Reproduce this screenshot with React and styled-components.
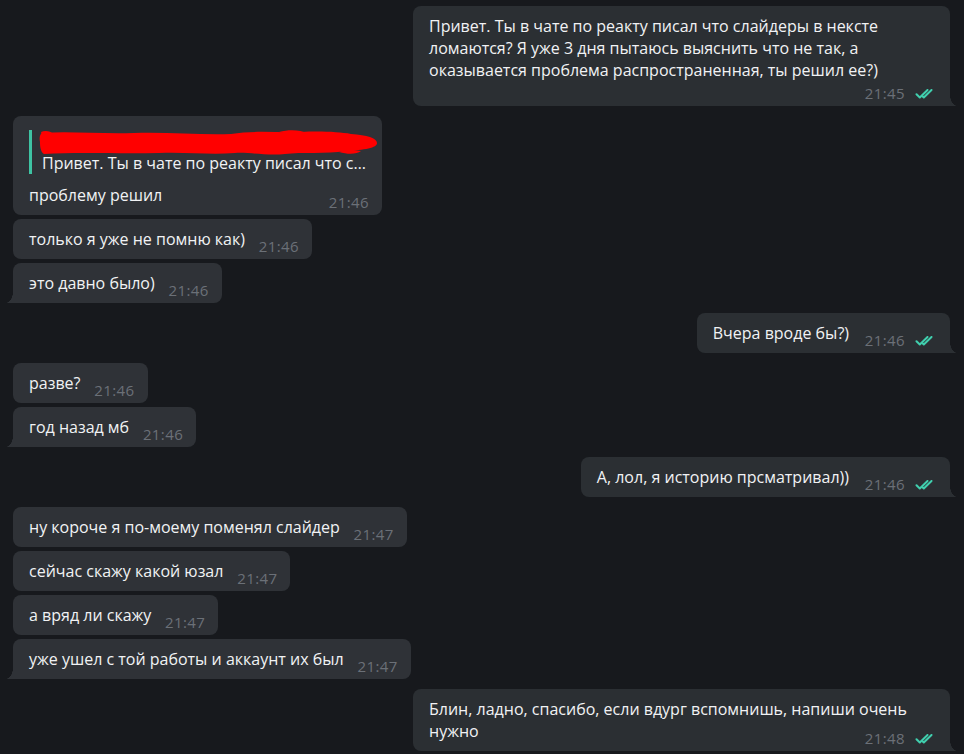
import styled, { createGlobalStyle } from "styled-components";

const GlobalStyle = createGlobalStyle`
  html, body {
    margin: 0;
    padding: 0;
    background: #17191d;
  }
  body {
    font-family: "Open Sans", "Noto Sans", sans-serif;
    -webkit-font-smoothing: antialiased;
  }
`;

const IN_BG = "#2f3237";
const OUT_BG = "#2b2f33";

const Chat = styled.div`
  display: flex;
  flex-direction: column;
  gap: 10px;
  padding: 6px 14px 0 13px;
  height: 754px;
  box-sizing: border-box;
  overflow: hidden;
`;

const Group = styled.div`
  display: flex;
  flex-direction: column;
  gap: 4px;
  align-items: ${props => (props.$out ? "flex-end" : "flex-start")};
`;

const Bubble = styled.div`
  position: relative;
  box-sizing: border-box;
  max-width: 537px;
  padding: 9px 13px 9px 16px;
  background: ${props => (props.$out ? OUT_BG : IN_BG)};
  border-radius: 8px;
  color: #f1f2f4;
  font-size: 16px;
  line-height: 16px;
  ${props =>
    props.$tail &&
    (props.$out
      ? `border-bottom-right-radius: 0;`
      : `border-bottom-left-radius: 0;`)}

  &::before {
    content: "";
    display: ${props => (props.$tail ? "block" : "none")};
    position: absolute;
    bottom: 0;
    width: 7px;
    height: 11px;
    ${props => (props.$out ? "right: -7px;" : "left: -7px;")}
    background: radial-gradient(
      ellipse 7px 11px at ${props => (props.$out ? "100% 0" : "0 0")},
      transparent 96%,
      ${props => (props.$out ? OUT_BG : IN_BG)} 100%
    );
  }
`;

const Text = styled.div`
  white-space: pre-wrap;
  word-wrap: break-word;
`;

const Line = styled.span`
  line-height: 22px;
`;

// reserves room at the end of the last line for the time / checks
const Spacer = styled.span`
  display: inline-block;
  width: ${props => (props.$out ? 88 : 54)}px;
  height: 16px;
  vertical-align: bottom;
`;

const Meta = styled.div`
  position: absolute;
  right: 13px;
  bottom: 5px;
  display: flex;
  align-items: baseline;
  gap: 10px;
  height: 16px;
  font-size: 15px;
  letter-spacing: 0.4px;
  line-height: 16px;
  color: #6b7077;
`;

const Reply = styled.div`
  width: 327px;
  margin: 6px 0 10px;
  padding-left: 10px;
  border-left: 3px solid #3ec3a3;
  line-height: 22px;
`;

const ReplyName = styled.div`
  height: 22px;
`;

const Redaction = styled.svg`
  display: block;
  margin: -1px 0 0 -3px;
`;

const ReplyText = styled.div`
  white-space: nowrap;
  overflow: hidden;
  text-overflow: ellipsis;
`;

function DoubleCheck() {
  return (
    <svg width="22" height="10" viewBox="0 0 22 10" fill="none">
      <path
        d="M1.5 5.2 L4.8 8.5 L12.5 1"
        stroke="#40cfae"
        strokeWidth="2"
        strokeLinecap="round"
        strokeLinejoin="round"
      />
      <path
        d="M7.5 7.2 L8.8 8.5 L16.5 1"
        stroke="#40cfae"
        strokeWidth="2"
        strokeLinecap="round"
        strokeLinejoin="round"
      />
    </svg>
  );
}

function Scribble() {
  return (
    <Redaction width="340" height="26" viewBox="0 0 340 26">
      <path
        fill="#ff0000"
        d="M3 3 C30 1 60 4 95 3 C130 2 160 5 192 4 C215 0 240 3 262 2 C282 1 300 2 312 4 C328 5 338 8 338 13 C338 18 326 20 306 21 C288 24 262 22 246 24 C228 26 210 22 196 23 C170 25 150 22 120 23 C80 24 40 22 5 24 C1 22 1 14 1 12 C0 8 1 4 3 3 Z"
      />
      <path fill="#ff0000" d="M240 2 C250 -1 262 0 268 3 L262 6 Z" />
      <path fill="#ff0000" d="M300 22 C310 25 318 24 322 21 L308 19 Z" />
      <path fill="#ff0000" d="M2 2 C6 0 12 1 14 4 L4 8 Z" />
    </Redaction>
  );
}

function Message({ msg, out, tail }) {
  return (
    <Bubble $out={out} $tail={tail}>
      {msg.reply && (
        <Reply>
          <ReplyName>
            <Scribble />
          </ReplyName>
          <ReplyText>{msg.reply}</ReplyText>
        </Reply>
      )}
      <Text>
        <Line>{msg.text}</Line>
        <Spacer $out={out} />
      </Text>
      <Meta>
        <span>{msg.time}</span>
        {out && <DoubleCheck />}
      </Meta>
    </Bubble>
  );
}

const groups = [
  {
    out: true,
    msgs: [
      {
        text: "Привет. Ты в чате по реакту писал что слайдеры в нексте ломаются? Я уже 3 дня пытаюсь выяснить что не так, а оказывается проблема распространенная, ты решил ее?)",
        time: "21:45",
      },
    ],
  },
  {
    out: false,
    msgs: [
      {
        reply: "Привет. Ты в чате по реакту писал что слайдеры в нексте ломаются?",
        text: "проблему решил",
        time: "21:46",
      },
      { text: "только я уже не помню как)", time: "21:46" },
      { text: "это давно было)", time: "21:46" },
    ],
  },
  { out: true, msgs: [{ text: "Вчера вроде бы?)", time: "21:46" }] },
  {
    out: false,
    msgs: [
      { text: "разве?", time: "21:46" },
      { text: "год назад мб", time: "21:46" },
    ],
  },
  { out: true, msgs: [{ text: "А, лол, я историю прсматривал))", time: "21:46" }] },
  {
    out: false,
    msgs: [
      { text: "ну короче я по-моему поменял слайдер", time: "21:47" },
      { text: "сейчас скажу какой юзал", time: "21:47" },
      { text: "а вряд ли скажу", time: "21:47" },
      { text: "уже ушел с той работы и аккаунт их был", time: "21:47" },
    ],
  },
  {
    out: true,
    msgs: [
      {
        text: "Блин, ладно, спасибо, если вдург вспомнишь, напиши очень нужно",
        time: "21:48",
      },
    ],
  },
];

export default function App() {
  return (
    <>
      <GlobalStyle />
      <Chat>
        {groups.map((g, gi) => (
          <Group key={gi} $out={g.out}>
            {g.msgs.map((m, mi) => (
              <Message key={mi} msg={m} out={g.out} tail={mi === g.msgs.length - 1} />
            ))}
          </Group>
        ))}
      </Chat>
    </>
  );
}
